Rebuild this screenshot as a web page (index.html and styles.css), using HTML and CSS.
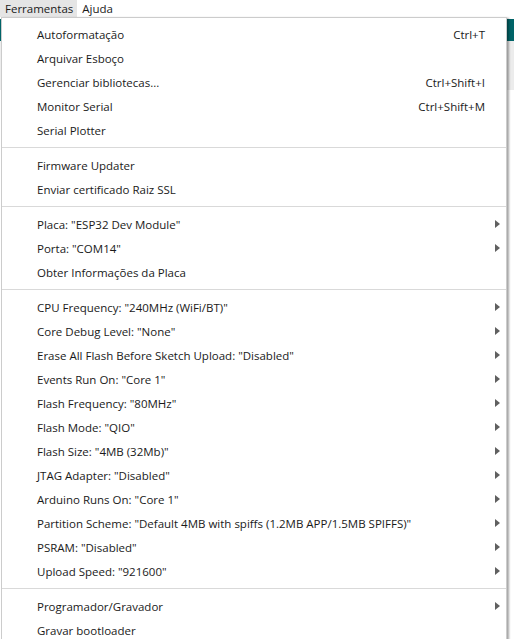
FILE: index.html
```html
<!DOCTYPE html>
<html>
<head>
<meta charset="utf-8">
<link rel="stylesheet" href="styles.css">
</head>
<body>
<div class="app">
  <div class="menubar">
    <span class="top active">Ferramentas</span>
    <span class="top">Ajuda</span>
  </div>
  <div class="workspace">
    <div class="teal"></div>
    <div class="grayband"></div>
    <div class="fill"></div>
  </div>
  <div class="menu">
    <div class="item"><span class="label">Autoformatação</span><span class="sc">Ctrl+T</span></div>
    <div class="item"><span class="label">Arquivar Esboço</span></div>
    <div class="item"><span class="label">Gerenciar bibliotecas...</span><span class="sc">Ctrl+Shift+I</span></div>
    <div class="item"><span class="label">Monitor Serial</span><span class="sc">Ctrl+Shift+M</span></div>
    <div class="item"><span class="label">Serial Plotter</span></div>
    <div class="sep"></div>
    <div class="item"><span class="label">Firmware Updater</span></div>
    <div class="item"><span class="label">Enviar certificado Raiz SSL</span></div>
    <div class="sep"></div>
    <div class="item sub"><span class="label">Placa: "ESP32 Dev Module"</span><span class="arrow"></span></div>
    <div class="item sub"><span class="label">Porta: "COM14"</span><span class="arrow"></span></div>
    <div class="item"><span class="label">Obter Informações da Placa</span></div>
    <div class="sep"></div>
    <div class="item sub"><span class="label">CPU Frequency: "240MHz (WiFi/BT)"</span><span class="arrow"></span></div>
    <div class="item sub"><span class="label">Core Debug Level: "None"</span><span class="arrow"></span></div>
    <div class="item sub"><span class="label">Erase All Flash Before Sketch Upload: "Disabled"</span><span class="arrow"></span></div>
    <div class="item sub"><span class="label">Events Run On: "Core 1"</span><span class="arrow"></span></div>
    <div class="item sub"><span class="label">Flash Frequency: "80MHz"</span><span class="arrow"></span></div>
    <div class="item sub"><span class="label">Flash Mode: "QIO"</span><span class="arrow"></span></div>
    <div class="item sub"><span class="label">Flash Size: "4MB (32Mb)"</span><span class="arrow"></span></div>
    <div class="item sub"><span class="label">JTAG Adapter: "Disabled"</span><span class="arrow"></span></div>
    <div class="item sub"><span class="label">Arduino Runs On: "Core 1"</span><span class="arrow"></span></div>
    <div class="item sub"><span class="label">Partition Scheme: "Default 4MB with spiffs (1.2MB APP/1.5MB SPIFFS)"</span><span class="arrow"></span></div>
    <div class="item sub"><span class="label">PSRAM: "Disabled"</span><span class="arrow"></span></div>
    <div class="item sub"><span class="label">Upload Speed: "921600"</span><span class="arrow"></span></div>
    <div class="sep"></div>
    <div class="item sub"><span class="label">Programador/Gravador</span><span class="arrow"></span></div>
    <div class="item"><span class="label">Gravar bootloader</span></div>
  </div>
</div>
</body>
</html>
```

FILE: styles.css
```css
html, body {
  margin: 0;
  padding: 0;
  background: #ffffff;
  overflow: hidden;
}
.app {
  position: relative;
  width: 514px;
  height: 639px;
  font-family: "Open Sans", "Noto Sans", sans-serif;
  font-size: 11.5px;
  color: #1a1a1a;
}
.menubar {
  display: flex;
  height: 17px;
  align-items: stretch;
  background: #ffffff;
}
.top {
  display: flex;
  align-items: center;
  padding: 0 4px 0 5px;
  line-height: 17px;
}
.top.active {
  background: #e5e5e5;
}
.workspace {
  display: flex;
  flex-direction: column;
  height: 622px;
}
.teal {
  height: 22px;
  margin-top: 2px;
  background: #006468;
}
.grayband {
  height: 49px;
  background: #ececec;
}
.fill {
  flex: 1;
  background: #fff;
}
.menu {
  position: absolute;
  left: 1px;
  top: 17px;
  width: 504px;
  background: #fff;
  border: 1px solid #cccccc;
  padding: 4px 0 0 0;
  box-shadow: 2px 1px 2px rgba(0,0,0,0.35);
  display: flex;
  flex-direction: column;
}
.item {
  height: 24px;
  display: flex;
  align-items: center;
  padding-left: 35px;
  padding-right: 21px;
  white-space: nowrap;
}
.label {
  flex: 1;
}
.item.sub {
  padding-right: 6px;
}
.arrow {
  width: 0;
  height: 0;
  border-top: 4px solid transparent;
  border-bottom: 4px solid transparent;
  border-left: 5px solid #606060;
}
.sep {
  height: 11px;
  display: flex;
  align-items: center;
}
.sep::before {
  content: "";
  display: block;
  width: 100%;
  height: 1px;
  background: #d9d9d9;
}
```
